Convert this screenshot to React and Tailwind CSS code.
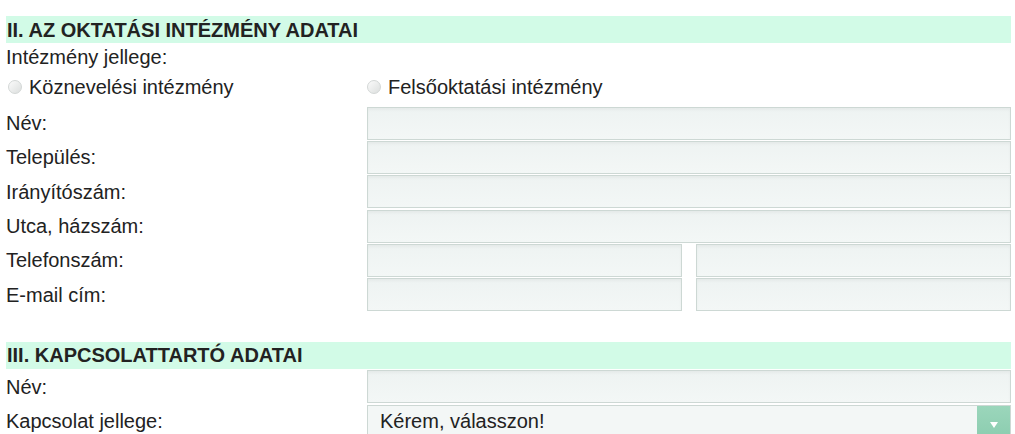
import { useState } from "react";

const font = { fontFamily: '"Liberation Sans", Arial, sans-serif' };

function SectionHeader({ children }) {
  return (
    <div className="h-[27px] bg-[#d2fbe7] px-[1px] flex items-center text-[20px] font-bold text-[#222] leading-none">
      {children}
    </div>
  );
}

function Field({ className = "" }) {
  return (
    <div
      className={
        "h-[33px] border border-[#cdd8d4] bg-gradient-to-b from-[#eef3f2] to-[#f3f7f6] shadow-[inset_0_2px_3px_rgba(0,0,0,0.04)] " +
        className
      }
    />
  );
}

function Row({ label, children }) {
  return (
    <div className="flex items-center h-[34.3px]">
      <div className="w-[361px] text-[20px] text-[#222]">{label}</div>
      <div className="flex-1 flex gap-[14px]">{children}</div>
    </div>
  );
}

function Radio({ label, checked, onClick }) {
  return (
    <label className="flex items-center gap-[7px] cursor-pointer" onClick={onClick}>
      <span className="w-[14px] h-[14px] rounded-full border border-[#d3d7d6] bg-gradient-to-br from-[#fbfbfb] to-[#dcdfde] flex items-center justify-center">
        {checked && <span className="w-[6px] h-[6px] rounded-full bg-[#555]" />}
      </span>
      <span className="text-[20px] text-[#222]">{label}</span>
    </label>
  );
}

export default function App() {
  const [kind, setKind] = useState(null);

  return (
    <div className="bg-white w-[1015px] h-[434px] overflow-hidden pt-[16px] pl-[6px] pr-[4px]" style={font}>
      <SectionHeader>II. AZ OKTATÁSI INTÉZMÉNY ADATAI</SectionHeader>
      <div className="h-[24px] mt-[2px] flex items-center text-[20px] text-[#222]">Intézmény jellege:</div>
      <div className="flex items-center h-[24px] mt-[6px] pl-[2px]">
        <div className="w-[359px]">
          <Radio label="Köznevelési intézmény" checked={kind === "k"} onClick={() => setKind("k")} />
        </div>
        <Radio label="Felsőoktatási intézmény" checked={kind === "f"} onClick={() => setKind("f")} />
      </div>
      <div className="mt-[7px]">
        <Row label="Név:"><Field className="flex-1" /></Row>
        <Row label="Település:"><Field className="flex-1" /></Row>
        <Row label="Irányítószám:"><Field className="flex-1" /></Row>
        <Row label="Utca, házszám:"><Field className="flex-1" /></Row>
        <Row label="Telefonszám:"><Field className="flex-1" /><Field className="flex-1" /></Row>
        <Row label="E-mail cím:"><Field className="flex-1" /><Field className="flex-1" /></Row>
      </div>
      <div className="mt-[30px]">
        <SectionHeader>III. KAPCSOLATTARTÓ ADATAI</SectionHeader>
      </div>
      <div className="mt-[1px]">
        <Row label="Név:"><Field className="flex-1" /></Row>
        <Row label="Kapcsolat jellege:">
          <div className="flex-1 h-[33px] border border-[#cdd8d4] bg-[#f3f7f6] flex items-stretch">
            <div className="flex-1 pl-[12px] flex items-center text-[20px] text-[#222]">Kérem, válasszon!</div>
            <div className="w-[33px] bg-gradient-to-b from-[#9bd6bb] to-[#8ccdb0] flex items-center justify-center pt-[8px]">
              <svg width="8" height="6" viewBox="0 0 8 6"><path d="M0 0H8L4 6Z" fill="#fff" /></svg>
            </div>
          </div>
        </Row>
      </div>
    </div>
  );
}
